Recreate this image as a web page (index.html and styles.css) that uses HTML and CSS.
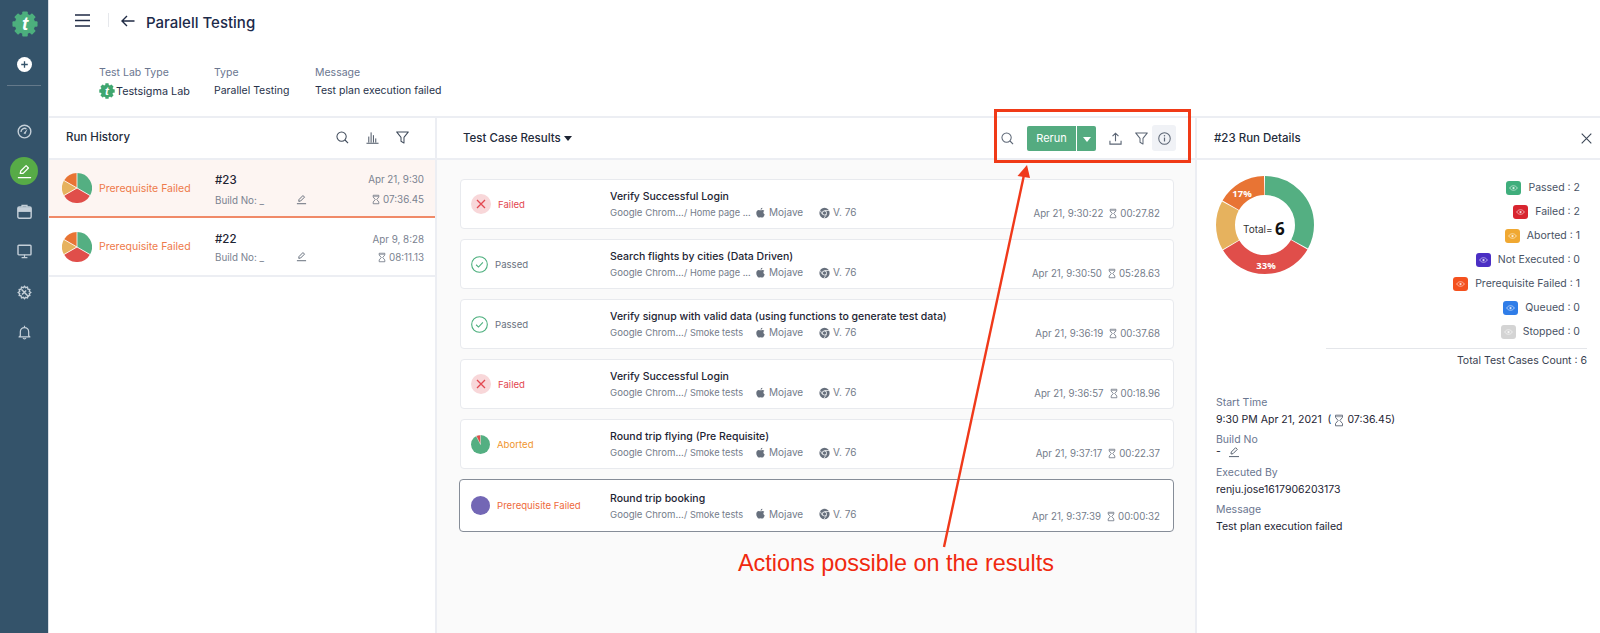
FILE: index.html
```html
<!DOCTYPE html>
<html lang="en">
<head>
<meta charset="utf-8">
<title>Paralell Testing</title>
<link rel="stylesheet" href="styles.css">
</head>
<body>
<svg class="defs" width="0" height="0" aria-hidden="true">
  <defs>
    <symbol id="i-search" viewBox="0 0 14 14"><circle cx="6" cy="6" r="5" fill="none" stroke="currentColor" stroke-width="1.1"/><path d="M9.7 9.7 13 13" stroke="currentColor" stroke-width="1.2" fill="none"/></symbol>
    <symbol id="i-filter" viewBox="0 0 14 14"><path d="M.7 1h12.6L8.600 6.800V13L5.400 11V6.800Z" fill="none" stroke="currentColor" stroke-width="1.100" stroke-linejoin="round"/></symbol>
    <symbol id="i-edit" viewBox="0 0 12 12"><path d="M3 8 3.300 6 7.600 1.700 9.300 3.400 5 7.700Z" fill="none" stroke="currentColor" stroke-width="1" stroke-linejoin="round"/><path d="M1 10.600h10" stroke="currentColor" stroke-width="1"/></symbol>
    <symbol id="i-hour" viewBox="0 0 10 12"><path d="M1.500.7h7v2.200L5.900 6l2.600 3.100v2.200h-7V9.100L4.100 6 1.500 2.900Z" fill="none" stroke="currentColor" stroke-width="1"/><path d="M2 2.200h6" stroke="currentColor" stroke-width=".7"/></symbol>
    <symbol id="i-apple" viewBox="0 0 12 12"><path d="M8 .4c.1 1-.7 2.100-1.900 2.100C6 1.500 6.900.5 8 .4ZM6.100 3.100c.6 0 1.200-.5 2.100-.5.8 0 1.500.4 2 1-1.600 1-1.300 3.200.4 3.900-.5 1.400-1.500 3.500-2.700 3.500-.7 0-1-.4-1.800-.4s-1.100.4-1.800.4C3 11 1.400 8.400 1.400 6c0-2.200 1.400-3.400 2.700-3.400.8 0 1.500.5 2 .5Z" fill="currentColor"/></symbol>
    <symbol id="i-chrome" viewBox="0 0 12 12"><circle cx="6" cy="6" r="5.600" fill="currentColor"/><circle cx="6" cy="6" r="2.600" fill="#fff"/><circle cx="6" cy="6" r="1.800" fill="currentColor"/><path d="M6 3.300h5M3.700 7.500 1.300 3.400M8.300 7.500 5.500 11.600" stroke="#fff" stroke-width=".8"/></symbol>
    <symbol id="i-eye" viewBox="0 0 12 8"><path d="M.8 4C2 2 3.900 1 6 1s4 1 5.200 3C10 6 8.100 7 6 7S2 6 .8 4Z" fill="none" stroke="#fff" stroke-opacity=".8" stroke-width=".9"/><circle cx="6" cy="4" r="1.500" fill="#fff" fill-opacity=".8"/></symbol>
    <symbol id="i-gear" viewBox="0 0 28 28"><g fill="currentColor"><circle cx="14" cy="14" r="11"/><rect x="11" y="0.500" width="6" height="27" rx="1"/><rect x="11" y="0.500" width="6" height="27" rx="1" transform="rotate(45 14 14)"/><rect x="11" y="0.500" width="6" height="27" rx="1" transform="rotate(90 14 14)"/><rect x="11" y="0.500" width="6" height="27" rx="1" transform="rotate(135 14 14)"/></g></symbol>
    <symbol id="i-pie" viewBox="0 0 30 30"><path d="M15 15V0a15 15 0 0 1 13 22.500Z" fill="#54af82"/><path d="M15 15 28 22.500a15 15 0 0 1-26 0Z" fill="#e04e4a"/><path d="M15 15 2 22.500A15 15 0 0 1 2 7.500Z" fill="#e6b25e"/><path d="M15 15 2 7.500A15 15 0 0 1 15 0Z" fill="#e87434"/><path d="M15 0V15L28 22.500M15 15 2 22.500M15 15 2 7.500" stroke="#fff" stroke-width=".8" fill="none"/></symbol>
  </defs>
</svg>

<div class="app">
  <aside class="sidebar">
    <svg class="logo" viewBox="0 0 28 28"><use href="#i-gear"/><text x="14" y="20.500" class="logo-t">t</text></svg>
    <span class="plus"><svg viewBox="0 0 16 16"><path d="M8 4.500v7M4.500 8h7" stroke="#34536a" stroke-width="1.400"/></svg></span>
    <hr class="side-rule">
    <nav class="side-nav">
      <span class="side-item"><svg viewBox="0 0 18 18"><circle cx="9" cy="9" r="7.600" fill="none" stroke="currentColor" stroke-width="1.700"/><path d="M4.800 9.500a4.300 4.300 0 0 1 6.500-3.700" fill="none" stroke="currentColor" stroke-width="1.600"/><path d="M7.800 11.200 12.800 5.800 10 12.200Z" fill="currentColor"/></svg></span>
      <span class="side-item active"><svg viewBox="0 0 18 18"><path d="M4.500 11 5 8.500 10.700 2.800 13.200 5.300 7.500 11Z" fill="none" stroke="#fff" stroke-width="1.300" stroke-linejoin="round"/><path d="M2 15.500h14" stroke="#fff" stroke-width="1.300"/></svg></span>
      <span class="side-item"><svg viewBox="0 0 18 18"><path d="M6 3.800V1.500h6v2.300" fill="none" stroke="currentColor" stroke-width="1.500"/><rect x="1" y="3.500" width="16" height="13.500" rx="1.800" fill="none" stroke="currentColor" stroke-width="1.700"/><path d="M1 4h16v5.500H1z" fill="currentColor"/></svg></span>
      <span class="side-item"><svg viewBox="0 0 18 18"><rect x="1.200" y="1.500" width="15.600" height="11.500" rx="1" fill="none" stroke="currentColor" stroke-width="1.700"/><path d="M9 13v3M5.500 16.300h7" stroke="currentColor" stroke-width="1.400"/></svg></span>
      <span class="side-item"><svg viewBox="0 0 18 18"><path fill="none" stroke="currentColor" stroke-width="1.600" d="M9 1.500l1.400 1.800 2.200-.7.500 2.300 2.300.5-.7 2.200L16.500 9l-1.800 1.400.7 2.200-2.300.5-.5 2.300-2.200-.7L9 16.500l-1.400-1.800-2.200.7-.5-2.300-2.300-.5.7-2.200L1.500 9l1.800-1.400-.7-2.200 2.300-.5.500-2.300 2.200.7Z"/><path d="M5.500 5.500l8.500 8.500M6 11.500l5-5" stroke="currentColor" stroke-width="1.800"/></svg></span>
      <span class="side-item"><svg viewBox="0 0 18 18"><path d="M4 13V8a5 5 0 0 1 10 0v5l1.500 1.300h-13Z" fill="none" stroke="currentColor" stroke-width="1.500" stroke-linejoin="round"/><path d="M9 1V3M7.300 15.500a1.800 1.800 0 0 0 3.400 0" fill="none" stroke="currentColor" stroke-width="1.400"/></svg></span>
    </nav>
  </aside>

  <div class="content">
    <header class="page-head">
      <div class="topbar">
        <svg class="burger" viewBox="0 0 15 13"><path d="M0 1h15M0 6.500h15M0 12h15" stroke="#1f2a44" stroke-width="1.300"/></svg>
        <span class="top-sep"></span>
        <svg class="back" viewBox="0 0 14 12"><path d="M13.500 6H1M6 1 1 6l5 5" fill="none" stroke="#1f2a44" stroke-width="1.400"/></svg>
        <h1>Paralell Testing</h1>
      </div>
      <div class="meta">
        <div class="meta-col lab"><span class="meta-label">Test Lab Type</span><span class="meta-value lab-value"><svg class="lab-logo" viewBox="0 0 28 28"><use href="#i-gear"/><text x="14" y="20.500" class="logo-t">t</text></svg>Testsigma Lab</span></div>
        <div class="meta-col type"><span class="meta-label">Type</span><span class="meta-value">Parallel Testing</span></div>
        <div class="meta-col"><span class="meta-label">Message</span><span class="meta-value">Test plan execution failed</span></div>
      </div>
    </header>

    <div class="panels">
      <section class="history">
        <div class="panel-head history-head">
          <span class="panel-title">Run History</span>
          <div class="tools">
            <svg class="tool"><use href="#i-search"/></svg>
            <svg class="tool" viewBox="0 0 14 14"><path d="M.5 13.200h13M3 12.500V6M5.500 12.500V1.500M8 12.500V4.500M10.500 12.500V8" stroke="currentColor" stroke-width="1" fill="none"/></svg>
            <svg class="tool"><use href="#i-filter"/></svg>
          </div>
        </div>
        <div class="run selected">
          <svg class="run-pie"><use href="#i-pie"/></svg>
          <span class="run-status">Prerequisite Failed</span>
          <div class="run-id"><b>#23</b><span class="run-build">Build No: _<svg class="edit"><use href="#i-edit"/></svg></span></div>
          <div class="run-time"><span>Apr 21, 9:30</span><span><svg class="hour"><use href="#i-hour"/></svg>07:36.45</span></div>
        </div>
        <div class="run">
          <svg class="run-pie"><use href="#i-pie"/></svg>
          <span class="run-status">Prerequisite Failed</span>
          <div class="run-id"><b>#22</b><span class="run-build">Build No: _<svg class="edit"><use href="#i-edit"/></svg></span></div>
          <div class="run-time"><span>Apr 9, 8:28</span><span><svg class="hour"><use href="#i-hour"/></svg>08:11.13</span></div>
        </div>
      </section>

      <section class="results">
        <div class="panel-head results-head">
          <span class="panel-title results-title">Test Case Results<i class="caret"></i></span>
          <div class="actions">
            <svg class="act"><use href="#i-search"/></svg>
            <div class="rerun"><button class="rerun-main">Rerun</button><button class="rerun-drop"><i class="caret white"></i></button></div>
            <svg class="act up" viewBox="0 0 14 14"><path d="M7 10V1.500M3.800 4.500 7 1.300l3.200 3.200M1 9.500v3.500h12V9.500" fill="none" stroke="currentColor" stroke-width="1.200"/></svg>
            <svg class="act"><use href="#i-filter"/></svg>
            <span class="info"><svg viewBox="0 0 14 14"><circle cx="7" cy="7" r="6.200" fill="none" stroke="currentColor" stroke-width="1.100"/><path d="M7 6v4.200" stroke="currentColor" stroke-width="1.300"/><circle cx="7" cy="4" r=".8" fill="currentColor"/></svg></span>
          </div>
        </div>
        <div class="cards">
          <article class="card">
            <div class="state failed"><span class="ic-fail"><svg viewBox="0 0 20 20"><path d="M6 6l8 8M14 6l-8 8" stroke="#e34850" stroke-width="1.300"/></svg></span>Failed</div>
            <div class="case"><h3>Verify Successful Login</h3><div class="sub"><span class="path"><span class="w-suite">Google Chrom...</span><span>/ Home page ...</span></span><span class="os"><svg class="mini"><use href="#i-apple"/></svg>Mojave</span><span class="ver"><svg class="mini"><use href="#i-chrome"/></svg>V. 76</span></div></div>
            <div class="when">Apr 21, 9:30:22<svg class="hour"><use href="#i-hour"/></svg>00:27.82</div>
          </article>
          <article class="card">
            <div class="state passed"><svg class="ic-pass" viewBox="0 0 20 20"><circle cx="10" cy="10" r="9.200" fill="none" stroke="#4caf7d" stroke-width="1.300"/><path d="M6 10.300l2.800 2.700L14 7.500" fill="none" stroke="#4caf7d" stroke-width="1.300"/></svg>Passed</div>
            <div class="case"><h3>Search flights by cities (Data Driven)</h3><div class="sub"><span class="path"><span class="w-suite">Google Chrom...</span><span>/ Home page ...</span></span><span class="os"><svg class="mini"><use href="#i-apple"/></svg>Mojave</span><span class="ver"><svg class="mini"><use href="#i-chrome"/></svg>V. 76</span></div></div>
            <div class="when">Apr 21, 9:30:50<svg class="hour"><use href="#i-hour"/></svg>05:28.63</div>
          </article>
          <article class="card">
            <div class="state passed"><svg class="ic-pass" viewBox="0 0 20 20"><circle cx="10" cy="10" r="9.200" fill="none" stroke="#4caf7d" stroke-width="1.300"/><path d="M6 10.300l2.800 2.700L14 7.500" fill="none" stroke="#4caf7d" stroke-width="1.300"/></svg>Passed</div>
            <div class="case"><h3>Verify signup with valid data (using functions to generate test data)</h3><div class="sub"><span class="path"><span class="w-suite">Google Chrom...</span><span>/ Smoke tests</span></span><span class="os"><svg class="mini"><use href="#i-apple"/></svg>Mojave</span><span class="ver"><svg class="mini"><use href="#i-chrome"/></svg>V. 76</span></div></div>
            <div class="when">Apr 21, 9:36:19<svg class="hour"><use href="#i-hour"/></svg>00:37.68</div>
          </article>
          <article class="card">
            <div class="state failed"><span class="ic-fail"><svg viewBox="0 0 20 20"><path d="M6 6l8 8M14 6l-8 8" stroke="#e34850" stroke-width="1.300"/></svg></span>Failed</div>
            <div class="case"><h3>Verify Successful Login</h3><div class="sub"><span class="path"><span class="w-suite">Google Chrom...</span><span>/ Smoke tests</span></span><span class="os"><svg class="mini"><use href="#i-apple"/></svg>Mojave</span><span class="ver"><svg class="mini"><use href="#i-chrome"/></svg>V. 76</span></div></div>
            <div class="when">Apr 21, 9:36:57<svg class="hour"><use href="#i-hour"/></svg>00:18.96</div>
          </article>
          <article class="card">
            <div class="state aborted"><svg class="ic" viewBox="0 0 20 20"><circle cx="10" cy="10" r="10" fill="#54af82"/><path d="M10 10 5.500 1.100A10 10 0 0 1 10 0Z" fill="#e04e4a" stroke="#fff" stroke-width=".5"/></svg>Aborted</div>
            <div class="case"><h3>Round trip flying (Pre Requisite)</h3><div class="sub"><span class="path"><span class="w-suite">Google Chrom...</span><span>/ Smoke tests</span></span><span class="os"><svg class="mini"><use href="#i-apple"/></svg>Mojave</span><span class="ver"><svg class="mini"><use href="#i-chrome"/></svg>V. 76</span></div></div>
            <div class="when">Apr 21, 9:37:17<svg class="hour"><use href="#i-hour"/></svg>00:22.37</div>
          </article>
          <article class="card current">
            <div class="state prereq"><svg class="ic" viewBox="0 0 20 20"><circle cx="10" cy="10" r="10" fill="#7367b5"/></svg>Prerequisite Failed</div>
            <div class="case"><h3>Round trip booking</h3><div class="sub"><span class="path"><span class="w-suite">Google Chrom...</span><span>/ Smoke tests</span></span><span class="os"><svg class="mini"><use href="#i-apple"/></svg>Mojave</span><span class="ver"><svg class="mini"><use href="#i-chrome"/></svg>V. 76</span></div></div>
            <div class="when">Apr 21, 9:37:39<svg class="hour"><use href="#i-hour"/></svg>00:00:32</div>
          </article>
        </div>
      </section>

      <section class="details">
        <div class="panel-head details-head">
          <span class="panel-title">#23 Run Details</span>
          <svg class="close" viewBox="0 0 11 11"><path d="M.7.7l9.600 9.600M10.300.7.700 10.300" stroke="#3b4656" stroke-width="1.100"/></svg>
        </div>
        <div class="summary">
          <svg class="donut" viewBox="0 0 98 98">
            <g fill="none" stroke-width="19" transform="rotate(-90 49 49)">
              <circle class="d-green" cx="49" cy="49" r="39.500" pathLength="600" stroke-dasharray="198 402"/>
              <circle class="d-red" cx="49" cy="49" r="39.500" pathLength="600" stroke-dasharray="198 402" stroke-dashoffset="-200"/>
              <circle class="d-yellow" cx="49" cy="49" r="39.500" pathLength="600" stroke-dasharray="98 502" stroke-dashoffset="-400"/>
              <circle class="d-orange" cx="49" cy="49" r="39.500" pathLength="600" stroke-dasharray="98 502" stroke-dashoffset="-500"/>
            </g>
            <text x="26" y="21" class="d-pct">17%</text>
            <text x="50" y="93" class="d-pct">33%</text>
            <text x="27" y="57" class="d-total">Total=</text>
            <text x="59" y="59" class="d-six">6</text>
          </svg>
          <ul class="legend">
            <li><span class="badge b-green"><svg><use href="#i-eye"/></svg></span>Passed : 2</li>
            <li><span class="badge b-red"><svg><use href="#i-eye"/></svg></span>Failed : 2</li>
            <li><span class="badge b-yellow"><svg><use href="#i-eye"/></svg></span>Aborted : 1</li>
            <li><span class="badge b-indigo"><svg><use href="#i-eye"/></svg></span>Not Executed : 0</li>
            <li><span class="badge b-orange"><svg><use href="#i-eye"/></svg></span>Prerequisite Failed : 1</li>
            <li><span class="badge b-blue"><svg><use href="#i-eye"/></svg></span>Queued : 0</li>
            <li><span class="badge b-grey"><svg><use href="#i-eye"/></svg></span>Stopped : 0</li>
          </ul>
        </div>
        <div class="total-count">Total Test Cases Count : 6</div>
        <dl class="facts">
          <dt>Start Time</dt>
          <dd>9:30 PM Apr 21, 2021 &nbsp;(<svg class="hour"><use href="#i-hour"/></svg>07:36.45)</dd>
          <dt>Build No</dt>
          <dd class="build">- <svg class="edit"><use href="#i-edit"/></svg></dd>
          <dt>Executed By</dt>
          <dd>renju.jose1617906203173</dd>
          <dt>Message</dt>
          <dd>Test plan execution failed</dd>
        </dl>
      </section>
    </div>
  </div>

  <div class="callout-box"></div>
  <svg class="callout-arrow" viewBox="0 0 1600 633"><path d="M944 547 1024 175" stroke="#f0391a" stroke-width="2.400" fill="none"/><path d="M1027 165 1030 178 1017.500 176Z" fill="#f0391a"/></svg>
  <div class="callout-text">Actions possible on the results</div>
</div>
</body>
</html>
```
FILE: styles.css
```css
* { box-sizing: border-box; }
html, body { margin: 0; height: 100%; background: #fff; }
body { font-family: Inter, "Noto Sans", sans-serif; font-size: 11px; color: #1d2433; overflow: hidden; }
.defs { position: absolute; }
.app { position: relative; display: flex; width: 1600px; height: 633px; overflow: hidden; }

/* sidebar */
.sidebar { width: 49px; flex: none; background: #34536a; display: flex; flex-direction: column; align-items: center; padding-top: 11px; border-right: 1px solid #d9dde4; }
.logo { width: 26px; height: 26px; color: #4caf7d; margin-left: 2px; flex: none; }
.logo-t { font: italic 700 20px "Liberation Sans", sans-serif; fill: #fff; text-anchor: middle; }
.plus { width: 15px; height: 15px; margin-top: 20px; background: #fff; border-radius: 50%; display: block; }
.plus svg { display: block; width: 15px; height: 15px; }
.side-rule { width: 34px; height: 1px; margin: 13px 0 0; border: 0; background: #64798a; flex: none; }
.side-nav { display: flex; flex-direction: column; align-items: center; margin-top: 31px; gap: 12.300px; }
.side-item { width: 28px; height: 28px; display: flex; align-items: center; justify-content: center; color: #c4cfd8; border-radius: 50%; }
.side-item svg { width: 15px; height: 15px; }
.side-item.active { background: #57ab47; }
.side-item.active svg { width: 17px; height: 17px; }

/* header */
.content { flex: 1; min-width: 0; display: flex; flex-direction: column; }
.page-head { height: 118px; flex: none; border-bottom: 2px solid #eceef3; }
.topbar { display: flex; align-items: center; height: 44px; padding-left: 26px; }
.burger { width: 15px; height: 13px; margin-top: -4px; }
.top-sep { width: 1px; height: 14px; background: #e6e8ec; margin: -4px 0 0 18px; }
.back { width: 14px; height: 12px; margin: -3px 0 0 12px; }
h1 { margin: 0 0 0 11px; font-size: 15px; font-weight: 500; color: #1c2a4a; }
.meta { display: flex; padding: 22px 0 0 50px; }
.meta-col { display: flex; flex-direction: column; gap: 5px; }
.meta-col.lab { width: 115px; }
.meta-col.type { width: 101px; }
.meta-label { color: #6a7690; font-size: 10.500px; line-height: 13px; }
.meta-value { font-size: 10.500px; line-height: 13px; color: #27324a; }
.lab-value { display: flex; align-items: center; margin-top: -1px; font-size: 10.800px; }
.lab-logo { width: 16px; height: 16px; color: #3fa66f; margin-right: 1px; flex: none; }

/* panels */
.panels { flex: 1; display: flex; min-height: 0; }
.panel-head { height: 42px; display: flex; align-items: center; justify-content: space-between; border-bottom: 2px solid #eceef3; }
.panel-title { font-size: 11.500px; font-weight: 500; color: #232b3b; }

/* history */
.history { width: 388px; flex: none; border-right: 2px solid #eceef3; }
.history-head { padding: 0 26px 2px 17px; }
.tools { display: flex; gap: 17px; color: #3f4a5a; }
.tool { width: 13px; height: 13px; }
.run { height: 59px; display: flex; align-items: center; padding-left: 13px; border-bottom: 2px solid #eceef3; }
.run.selected { background: #fdf5f2; border-bottom-color: #f08a68; height: 58px; }
.run-pie { width: 30px; height: 30px; flex: none; }
.run-status { width: 116px; margin-left: 7px; color: #ee7a4a; font-size: 10.500px; }
.run-id { width: 105px; display: flex; flex-direction: column; gap: 5px; padding-top: 3px; }
.selected .run-id, .selected .run-time { gap: 7px; }
.run-id b { font-weight: 500; font-size: 11.500px; color: #1d2433; line-height: 14px; }
.run-build { display: flex; justify-content: space-between; width: 92px; color: #7a8290; font-size: 9.800px; line-height: 13px; }
.edit { width: 11px; height: 11px; color: #5a6472; }
.run-time { width: 104px; display: flex; flex-direction: column; align-items: flex-end; gap: 5px; padding-top: 3px; color: #7a8290; font-size: 9.800px; line-height: 13px; }
.run-time span { display: flex; align-items: center; }
.hour { width: 8px; height: 11px; color: #6a7280; margin: 0 3px 0 0; flex: none; }

/* results */
.results { width: 760px; flex: none; background: #fafafa; border-right: 2px solid #eceef3; }
.results-head { background: #fff; padding: 0 19px 0 26px; }
.results-title { display: flex; align-items: center; }
.caret { display: inline-block; width: 0; height: 0; border: 4px solid transparent; border-top: 5px solid #1d2433; border-bottom: 0; margin-left: 3px; }
.caret.white { border-top-color: #fff; margin: 0; }
.actions { display: flex; align-items: center; color: #5c6675; }
.act { width: 13px; height: 13px; margin-right: 13px; }
.act.up { margin-left: 13px; }
.rerun { display: flex; gap: 1px; }
.rerun-main, .rerun-drop { border: 0; height: 25px; background: #54ab80; color: #fff; font: 400 11px Inter, sans-serif; padding: 0; border-radius: 2px 0 0 2px; }
.rerun-main { width: 49px; }
.rerun-drop { width: 19px; border-radius: 0 2px 2px 0; }
.info { width: 24px; height: 26px; background: #f0f2f6; border-radius: 3px; display: flex; align-items: center; justify-content: center; margin-left: -9px; }
.info svg { width: 13px; height: 13px; }
.cards { padding: 19px 21px 0 23px; display: flex; flex-direction: column; gap: 10px; }
.card { height: 50px; display: flex; align-items: center; padding: 0 13px 0 10px; background: #fff; border: 1px solid #e8eaee; border-radius: 4px; }
.card.current { height: 53px; margin: 0 0 0 -1px; padding-left: 11px; border-color: #868d98; }
.state { width: 139px; flex: none; display: flex; align-items: center; gap: 7px; font-size: 9.600px; }
.ic { width: 19px; height: 19px; flex: none; }
.ic-pass { width: 17px; height: 17px; flex: none; }
.ic-fail { width: 20px; height: 20px; background: #f8d7d9; border-radius: 50%; flex: none; }
.ic-fail svg { display: block; width: 20px; height: 20px; }
.failed { color: #e34850; }
.passed { color: #6a7280; }
.aborted { color: #f0962e; }
.prereq { color: #ee6a3c; }
.case { flex: 1; min-width: 0; padding-top: 1px; }
.case h3 { margin: 0 0 2px; font-size: 10.500px; line-height: 14px; font-weight: 500; color: #1d2433; }
.sub { display: flex; align-items: center; font-size: 9.200px; line-height: 13px; color: #747c8a; }
.path { width: 145px; flex: none; display: flex; white-space: nowrap; }
.w-suite { width: 74px; flex: none; font-size: 9.600px; }
.os { width: 64px; flex: none; display: flex; align-items: center; font-size: 10px; }
.ver { display: flex; align-items: center; font-size: 10px; }
.mini { width: 11px; height: 12px; margin-right: 3px; color: #67707d; flex: none; }
.when { align-self: flex-end; padding-bottom: 8px; display: flex; align-items: center; font-size: 9.700px; line-height: 13px; color: #747c8a; }
.when .hour { margin-left: 6px; }

/* details */
.details { flex: 1; min-width: 0; }
.details-head { padding: 0 8px 0 17px; }
.close { width: 11px; height: 11px; }
.summary { display: flex; justify-content: space-between; padding: 16px 20px 0 19px; height: 192px; }
.donut { width: 98px; height: 98px; flex: none; }
.d-green { stroke: #54af82; }
.d-red { stroke: #e04e4a; }
.d-yellow { stroke: #e6b25e; }
.d-orange { stroke: #e87434; }
.d-pct { font: 700 9.500px "Open Sans", sans-serif; fill: #fff; text-anchor: middle; }
.d-total { font: 400 10px Inter, sans-serif; fill: #333; }
.d-six { font: 700 17px "Open Sans", sans-serif; fill: #111; }
.legend { margin: 0; padding: 5px 0 0; list-style: none; display: flex; flex-direction: column; align-items: flex-end; gap: 10px; font-size: 10.500px; line-height: 14px; color: #485264; }
.legend li { display: flex; align-items: center; gap: 7px; }
.badge { width: 15px; height: 14px; border-radius: 3px; display: flex; align-items: center; justify-content: center; }
.badge svg { width: 9px; height: 6px; }
.b-green { background: #3fae7c; }
.b-red { background: #d8252f; }
.b-yellow { background: #f0a832; }
.b-indigo { background: #4b2fc4; }
.b-orange { background: #f4511e; }
.b-blue { background: #2f7de8; }
.b-grey { background: #d4d4d4; }
.total-count { margin: -4px 13px 0 129px; border-top: 1px solid #e4e6ea; padding-top: 5px; text-align: right; font-size: 10.500px; line-height: 13px; color: #37404f; }
.facts { margin: 29px 0 0; padding-left: 19px; font-size: 10.500px; line-height: 14px; }
.facts dt { color: #6a7690; }
.facts dd { margin: 3px 0 6px; color: #1d2433; display: flex; align-items: center; }
.facts .hour { width: 10px; height: 13px; margin: 0 3px; }
.facts .build { margin: -1px 0 8px; gap: 7px; height: 12px; }
.facts .edit { width: 12px; height: 12px; }

/* annotation */
.callout-box { position: absolute; left: 994px; top: 109px; width: 197px; height: 54px; border: 3px solid #f03a17; }
.callout-arrow { position: absolute; left: 0; top: 0; width: 1600px; height: 633px; pointer-events: none; }
.callout-text { position: absolute; left: 738px; top: 550px; font: 400 23.400px "Liberation Sans", Arial, sans-serif; color: #f0290f; white-space: nowrap; }
```
